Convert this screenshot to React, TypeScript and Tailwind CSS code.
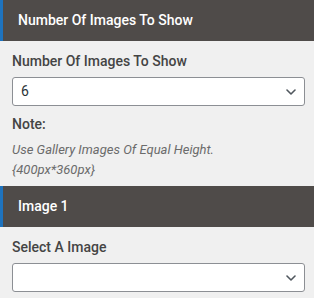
function SectionHeader({ title }: { title: string }) {
  return (
    <div className="h-[41px] flex items-center bg-[#4f4b49] border-l-[3px] border-[#1e73be] pl-[15px] text-[14px] font-medium text-white">
      {title}
    </div>
  );
}

function SelectBox({ value }: { value: string }) {
  return (
    <div className="ml-3 mr-[9px] h-[29px] flex items-center justify-between bg-white border border-[#8c8f94] rounded-[3px] pl-2 pr-[8px] text-[14px] text-[#2c3338]">
      <span>{value}</span>
      <svg width="10" height="6" viewBox="0 0 10 6" fill="none" className="text-[#50575e]">
        <path d="M1 1l4 4 4-4" stroke="currentColor" strokeWidth="1.6" strokeLinecap="round" strokeLinejoin="round" />
      </svg>
    </div>
  );
}

export default function App() {
  return (
    <div className="w-[314px] h-[298px] bg-[#f0f0f0] font-['Roboto',sans-serif] overflow-hidden">
      <SectionHeader title="Number Of Images To Show" />
      <div className="pt-[10px] pb-[6px]">
        <div className="px-3 text-[14px] font-medium text-[#444] leading-[20px] mb-[6px]">Number Of Images To Show</div>
        <SelectBox value="6" />
        <div className="px-3 mt-[8px] text-[14px] font-medium text-[#444] leading-[20px]">Note:</div>
        <div className="px-3 mt-[6px] text-[13px] italic text-[#6b6b6b] leading-[20px]">
          Use Gallery Images Of Equal Height.
          <br />
          {"{400px*360px}"}
        </div>
      </div>
      <SectionHeader title="Image 1" />
      <div className="pt-[10px]">
        <div className="px-3 text-[14px] font-medium text-[#444] leading-[20px] mb-[6px]">Select A Image</div>
        <SelectBox value="" />
      </div>
    </div>
  );
}
